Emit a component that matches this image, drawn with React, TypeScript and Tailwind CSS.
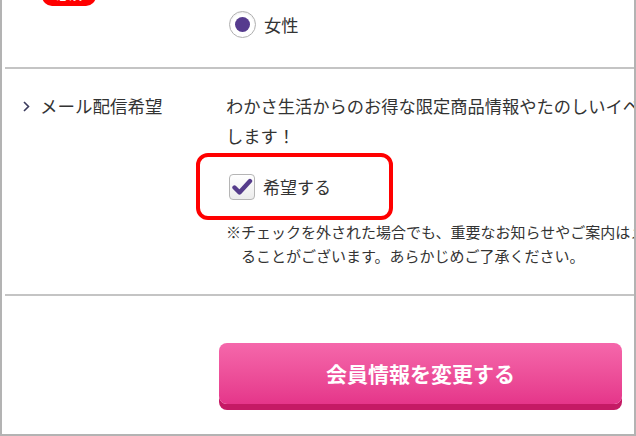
export default function App() {
  const font = "font-['Noto_Sans_CJK_JP','Noto_Sans',sans-serif]";
  return (
    <div className={`h-[436px] w-[636px] overflow-hidden border-x-2 border-b-2 border-[#b3b3b3] bg-white text-[#333] ${font}`}>
      {/* gender row (tail) */}
      <div className="ml-[3px] flex h-[69px] items-start border-b-2 border-[#c4c4c4]">
        <div className="w-[221px] shrink-0">
          <div className="-mt-[18px] ml-[37px] flex h-[24px] w-[54px] items-start justify-center rounded-[10px] bg-[#ff0000] pt-[5px] text-[13px] font-bold leading-none text-white">
            必須
          </div>
        </div>
        <label className="mt-[11px] ml-[3px] flex items-center gap-[8px]">
          <span className="flex h-[27px] w-[27px] items-center justify-center rounded-full border-[1.5px] border-[#b0b0b0] bg-white shadow-[inset_0_1px_2px_rgba(0,0,0,0.08)]">
            <span className="h-[15px] w-[15px] rounded-full bg-[#563b8e]" />
          </span>
          <span className="text-[17.25px] leading-[26px]">女性</span>
        </label>
      </div>

      {/* mail newsletter row */}
      <div className="ml-[3px] flex border-b-2 border-[#c4c4c4] pt-[22px] pb-[26px]">
        <div className="flex h-[30px] w-[221px] shrink-0 items-center pl-[18px]">
          <svg className="h-[11px] w-[7px]" viewBox="0 0 7 11" fill="none" stroke="#3a3a5c" strokeWidth={1.6}>
            <path d="M1 1l4.5 4.5L1 10" />
          </svg>
          <span className="ml-[10px] text-[17.5px] leading-[30px]">メール配信希望</span>
        </div>
        <div className="w-[640px] shrink-0">
          <p className="whitespace-nowrap text-[17.25px] leading-[30px]">
            わかさ生活からのお得な限定商品情報やたのしいイベント情報をメールでお届け
            <br />
            します！
          </p>
          <div className="mt-[2px] -ml-[30px] flex h-[67px] w-[197px] items-center rounded-[12px] border-4 border-[#ff0000] pl-[29px]">
            <span className="flex h-[26px] w-[26px] items-center justify-center rounded-[4px] border border-[#b5b5b5] bg-gradient-to-b from-white to-[#ececec]">
              <svg className="h-[22px] w-[22px]" viewBox="0 0 22 22" fill="none" stroke="#553c8b" strokeWidth={4.4} strokeLinecap="round" strokeLinejoin="round">
                <path d="M3.5 11.5l5 5L19 5" />
              </svg>
            </span>
            <span className="ml-[8px] text-[17px] leading-none">希望する</span>
          </div>
          <p className="whitespace-nowrap pl-[1em] -indent-[1em] text-[15px] leading-[24px]">
            ※チェックを外された場合でも、重要なお知らせやご案内はメールでお送りす
            <br />
            ることがございます。あらかじめご了承ください。
          </p>
        </div>
      </div>

      {/* submit */}
      <div className="ml-[3px] pt-[47px] pl-[214px]">
        <button
          type="button"
          className="flex h-[61px] w-[403px] items-center justify-center rounded-[8px] bg-gradient-to-b from-[#f567ab] to-[#e5358a] text-[21px] font-bold text-white shadow-[0_6px_0_#c51a65]"
        >
          会員情報を変更する
        </button>
      </div>
    </div>
  );
}
